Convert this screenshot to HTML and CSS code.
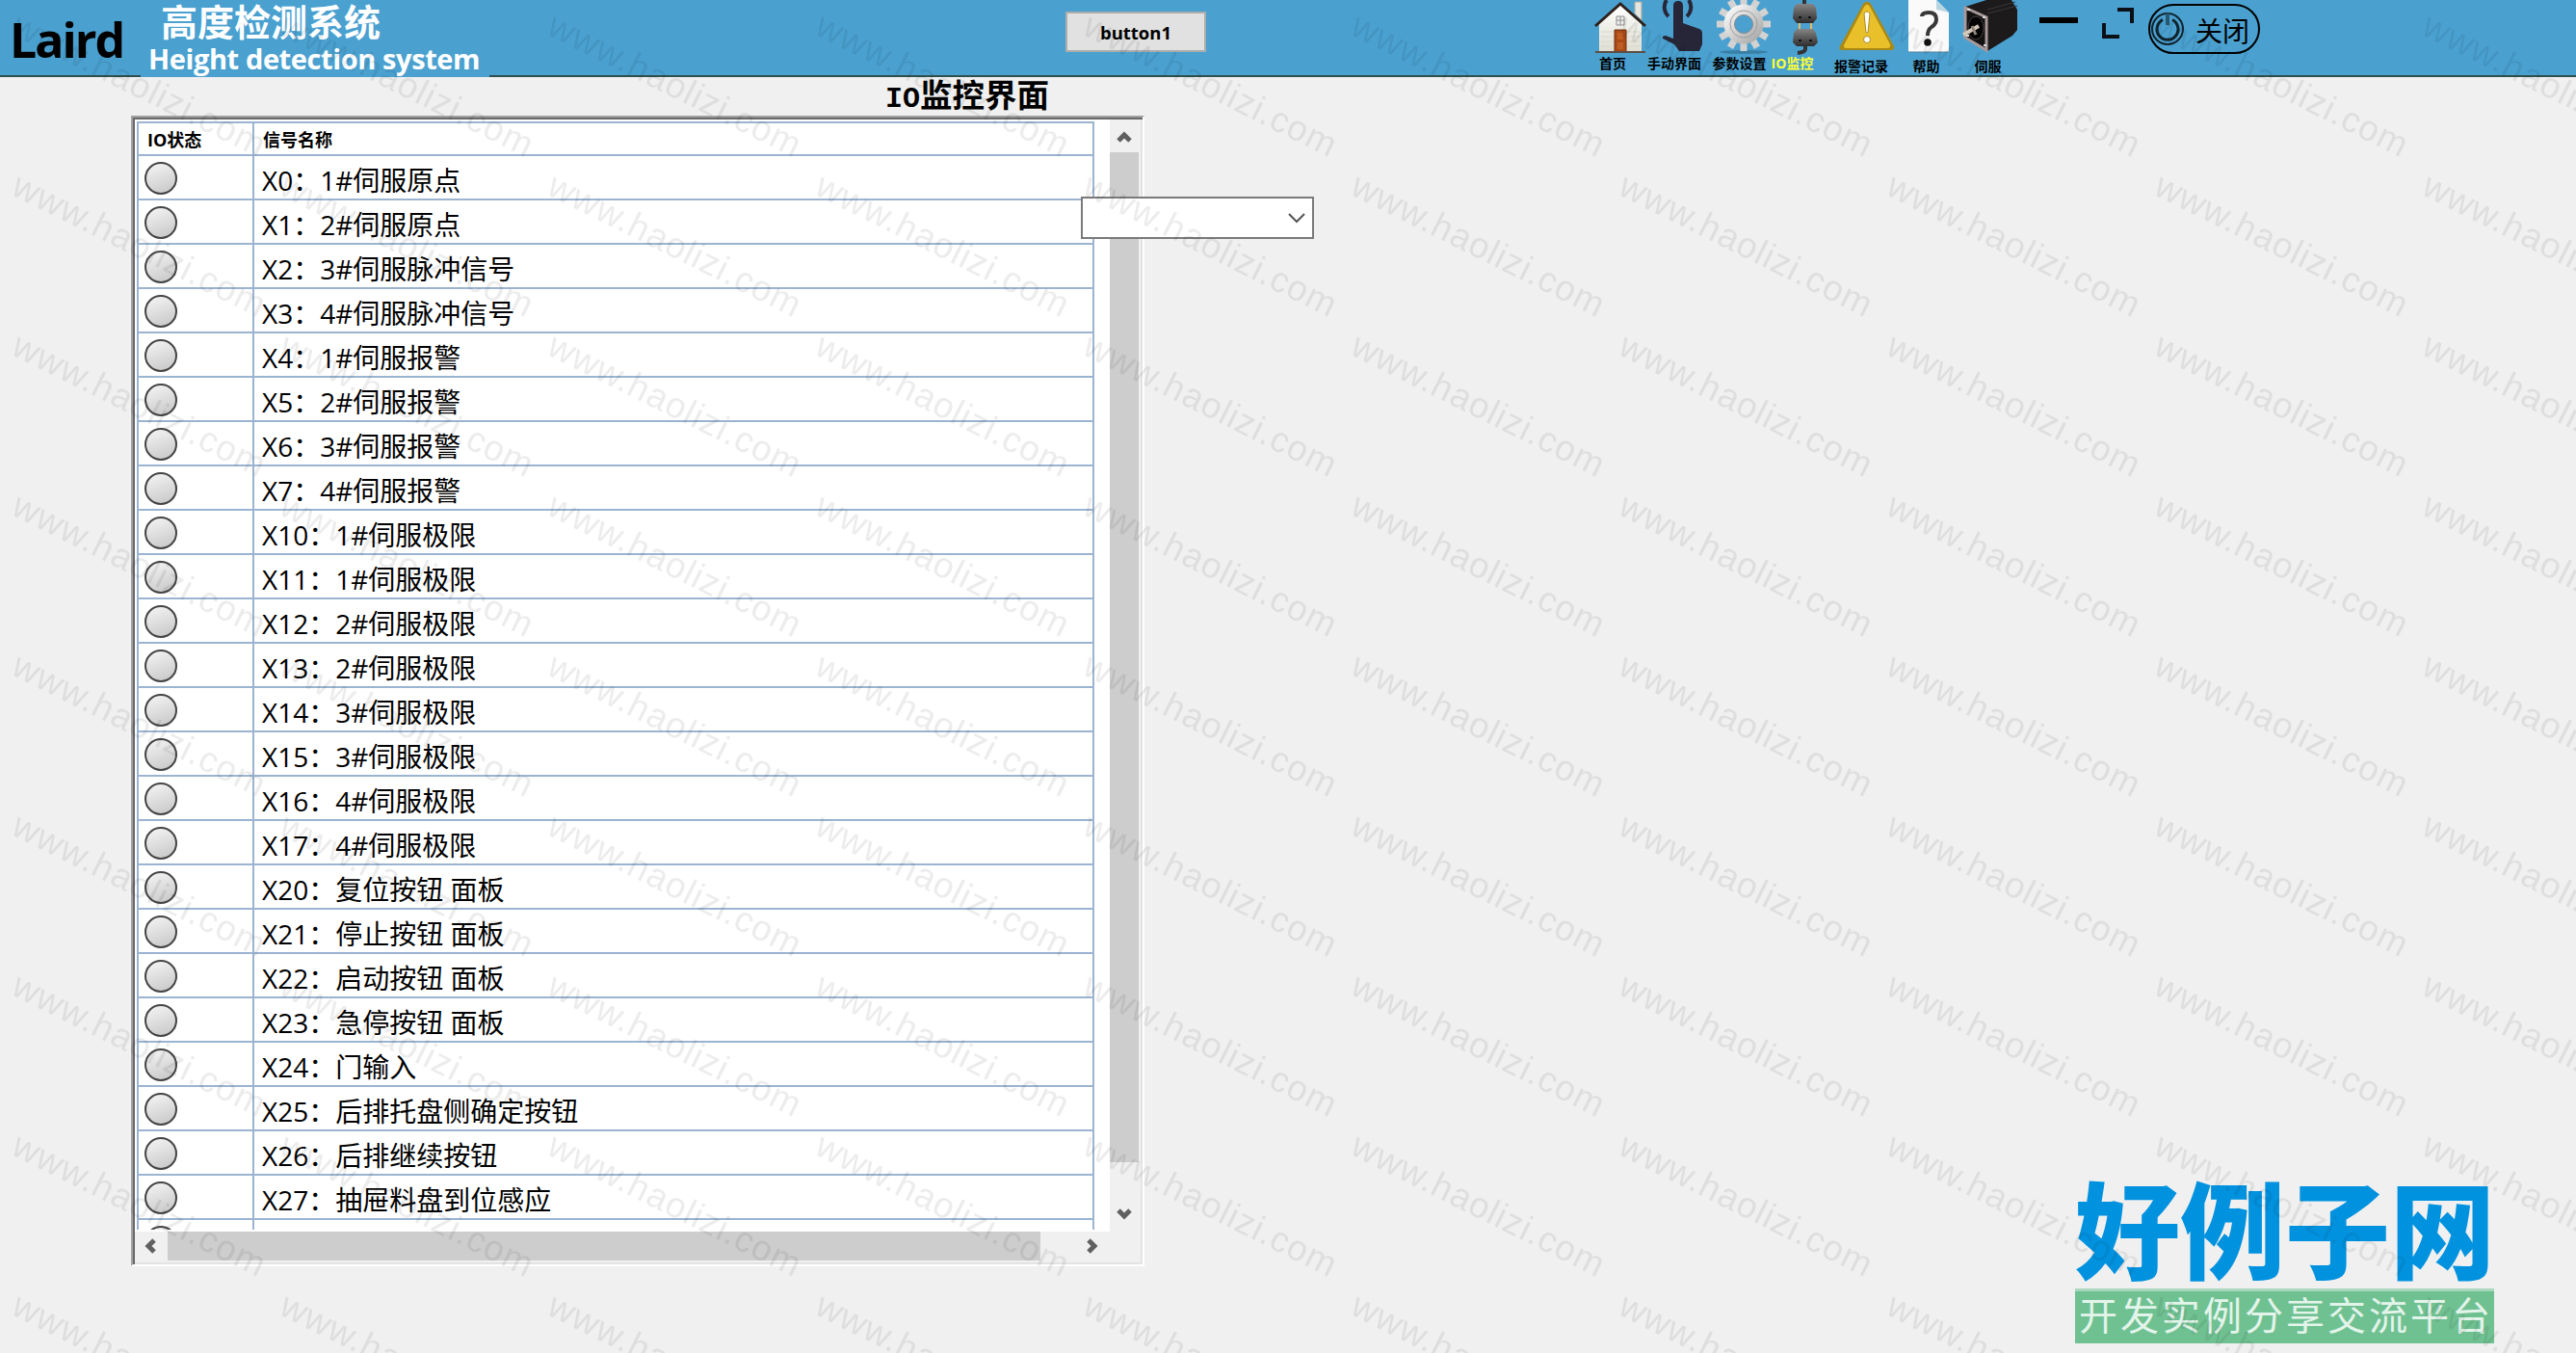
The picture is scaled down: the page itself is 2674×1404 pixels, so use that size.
FILE: index.html
```html
<!DOCTYPE html>
<html lang="zh-CN">
  <head>
    <meta charset="UTF-8" />
    <meta name="viewport" content="width=device-width, initial-scale=1.0" />
    <title>高度检测系统</title>
    <link rel="stylesheet" href="styles.css">
  </head>
  <body>
    <header class="topbar">
      <div class="brand">Laird</div>
      <div class="system-name">
        <div class="name-cn">高度检测系统</div>
        <div class="name-en">Height detection system</div>
      </div>
      <button class="test-btn">button1</button>
      <nav class="menu">
        <a class="menu-item home">
          <svg width="56" height="57" viewBox="0 0 56 57">
            <defs>
              <linearGradient id="wall" x1="0" y1="0" x2="0" y2="1">
                <stop offset="0" stop-color="#ffffff" />
                <stop offset="1" stop-color="#deded2" />
              </linearGradient>
            </defs>
            <path d="M43 2h7v19l-7-7z" fill="#e6e6e0" stroke="#a9a9a0" />
            <path d="M6 25L28 4l22 21v29H6z" fill="url(#wall)" />
            <path d="M8 33h40M8 38h40M8 43h40M8 48h40" stroke="#d8d8cc" />
            <path d="M2 27L28 4l26 23" fill="none" stroke="#2e211c" stroke-width="3" />
            <path d="M24 17h8v9h-8zM28 17v9M24 21h8" fill="#eee" stroke="#8d8d8d" />
            <path d="M22 31h12v23H22z" fill="#ac4a16" stroke="#713010" />
            <path d="M25 34h6v7h-6zM25 44h6v7h-6z" fill="#bf5d25" />
            <path d="M2 54h52" stroke="#5b4e45" stroke-width="2" />
          </svg>
          <span>首页</span>
        </a>
        <a class="menu-item manual">
          <svg width="44" height="57" viewBox="0 0 44 57">
            <path d="M8 17A13 13 0 0 1 6 0M27 17A13 13 0 0 0 29 0" fill="none" stroke="#262638" stroke-width="4" />
            <path d="M13 40V6Q13 1 18 1T23 6v18l17 6q3 1 3 5v11l-3 7H19l-5-7L2 40q-1-3 3-3z" fill="#262638" />
          </svg>
          <span>手动界面</span>
        </a>
        <a class="menu-item setting">
          <svg width="58" height="57" viewBox="-29 -25 58 57">
            <defs>
              <linearGradient id="metal" x1="0" y1="0" x2="1" y2="1">
                <stop offset="0" stop-color="#f7f7f7" />
                <stop offset="1" stop-color="#ababab" />
              </linearGradient>
            </defs>
            <ellipse cx="0" cy="29" rx="25" ry="2" fill="#3980a6" />
            <g stroke="#d2d2d2" stroke-width="7">
              <path d="M0-28V-16M0 16V28M-28 0H-16M16 0H28" />
              <path d="M14-24.2L8-13.9M-14-24.2L-8-13.9M14 24.2L8 13.9M-14 24.2L-8 13.9" />
              <path d="M24.2-14L13.9-8M-24.2-14L-13.9-8M24.2 14L13.9 8M-24.2 14L-13.9 8" />
            </g>
            <circle r="15" fill="none" stroke="url(#metal)" stroke-width="11" />
            <circle r="14" fill="none" stroke="#9d9d9d" />
            <circle r="9.5" fill="none" stroke="#888" />
          </svg>
          <span>参数设置</span>
        </a>
        <a class="menu-item monitor active">
          <svg width="28" height="57" viewBox="0 0 28 57">
            <defs>
              <linearGradient id="plug" x1="0" y1="0" x2="0" y2="1">
                <stop offset="0" stop-color="#858585" />
                <stop offset="1" stop-color="#2e2e2e" />
              </linearGradient>
            </defs>
            <path d="M13 0v6M14 45v6q0 3-8 4" fill="none" stroke="#333" stroke-width="4" />
            <path d="M8 23v8M20 23v8" stroke="#e5bd61" stroke-width="2" />
            <path d="M5 4h17l3 4 1 11-4 5H5l-4-5L2 8z" fill="url(#plug)" />
            <path d="M5 30h17l3 4 2 10-4 4H5l-4-4 1-10z" fill="url(#plug)" />
            <path d="M7 18h3M17 18h3M7 42h3M18 42h3" stroke="#111" stroke-width="2" />
          </svg>
          <span>IO监控</span>
        </a>
        <a class="menu-item alarm">
          <svg width="60" height="57" viewBox="0 0 60 57">
            <path d="M26 4q4-5 8 0l24 44q1 4-3 4H4q-4 0-2-4z" fill="#a98914" />
            <path d="M27 7q3-5 6 0l21 39q1 4-3 4H9q-4 0-3-3z" fill="#e9c02a" />
            <path d="M27 14q3-4 6 0l-2 20h-2z" fill="#fff" stroke="#a98c25" />
            <circle cx="30" cy="41" r="3.5" fill="#fff" stroke="#a98c25" />
          </svg>
          <span>报警记录</span>
        </a>
        <a class="menu-item help">
          <svg width="44" height="57" viewBox="0 0 44 57">
            <path d="M1 0h29l13 13v41H1z" fill="#fafafa" />
            <path d="M30 0l13 13-13-3z" fill="#b9d5e2" />
            <path d="M15 17q0-4 7-4 8 0 8 7 0 5-5 8-4 3-4 9" fill="none" stroke="#383838" stroke-width="4" />
            <circle cx="21" cy="44" r="3.8" fill="#111" />
            <path d="M1 54h42" stroke="#517f96" />
          </svg>
          <span>帮助</span>
        </a>
        <a class="menu-item servo">
          <svg width="60" height="57" viewBox="0 0 60 57">
            <path d="M4 7L26 0h26l6 10v21l-5 6-26 16z" fill="#1d1a1c" />
            <path d="M27 10L56 2M27 14l31-8" stroke="#3b3738" />
            <path d="M4 8l22 10v34L4 39z" fill="#131112" stroke="#a79999" stroke-width="3" />
            <ellipse cx="15" cy="29" rx="8" ry="12" fill="#050505" stroke="#49413f" />
            <path d="M2 36l16-9" stroke="#d3c7b8" stroke-width="4" />
            <path d="M11 27l4 9" stroke="#91877b" stroke-width="3" />
            <path d="M6 10h3M22 18h3M23 47h3M5 37h3" stroke="#ddd" stroke-width="2" />
          </svg>
          <span>伺服</span>
        </a>
      </nav>
      <svg class="minimize" width="40" height="6"><path d="M0 3h40" stroke="#000" stroke-width="6" /></svg>
      <svg class="maximize" width="34" height="34" viewBox="0 0 34 34">
        <path d="M16 2h15v14M2 16v14h16" fill="none" stroke="#0a1016" stroke-width="4" />
      </svg>
      <button class="close-btn">
        <svg width="36" height="36" viewBox="0 0 36 36" fill="none" stroke="#10242e">
          <circle cx="18" cy="18" r="16" stroke-width="2" />
          <path d="M13 8.500A11 11 0 1 0 23 8.500" stroke-width="3" />
          <path d="M18 2v12" stroke="#285870" stroke-width="4" />
        </svg>
        <span>关闭</span>
      </button>
    </header>

    <main class="page">
      <h1 class="page-title"><span>IO</span>监控界面</h1>
      <section class="panel">
        <div class="viewport">
          <div class="io-table">
            <div class="row head"><div>IO状态</div><div>信号名称</div></div>
            <div class="row"><div><i class="lamp"></i></div><div>X0：1#伺服原点</div></div>
            <div class="row"><div><i class="lamp"></i></div><div>X1：2#伺服原点</div></div>
            <div class="row"><div><i class="lamp"></i></div><div>X2：3#伺服脉冲信号</div></div>
            <div class="row"><div><i class="lamp"></i></div><div>X3：4#伺服脉冲信号</div></div>
            <div class="row"><div><i class="lamp"></i></div><div>X4：1#伺服报警</div></div>
            <div class="row"><div><i class="lamp"></i></div><div>X5：2#伺服报警</div></div>
            <div class="row"><div><i class="lamp"></i></div><div>X6：3#伺服报警</div></div>
            <div class="row"><div><i class="lamp"></i></div><div>X7：4#伺服报警</div></div>
            <div class="row"><div><i class="lamp"></i></div><div>X10：1#伺服极限</div></div>
            <div class="row"><div><i class="lamp"></i></div><div>X11：1#伺服极限</div></div>
            <div class="row"><div><i class="lamp"></i></div><div>X12：2#伺服极限</div></div>
            <div class="row"><div><i class="lamp"></i></div><div>X13：2#伺服极限</div></div>
            <div class="row"><div><i class="lamp"></i></div><div>X14：3#伺服极限</div></div>
            <div class="row"><div><i class="lamp"></i></div><div>X15：3#伺服极限</div></div>
            <div class="row"><div><i class="lamp"></i></div><div>X16：4#伺服极限</div></div>
            <div class="row"><div><i class="lamp"></i></div><div>X17：4#伺服极限</div></div>
            <div class="row"><div><i class="lamp"></i></div><div>X20：复位按钮 面板</div></div>
            <div class="row"><div><i class="lamp"></i></div><div>X21：停止按钮 面板</div></div>
            <div class="row"><div><i class="lamp"></i></div><div>X22：启动按钮 面板</div></div>
            <div class="row"><div><i class="lamp"></i></div><div>X23：急停按钮 面板</div></div>
            <div class="row"><div><i class="lamp"></i></div><div>X24：门输入</div></div>
            <div class="row"><div><i class="lamp"></i></div><div>X25：后排托盘侧确定按钮</div></div>
            <div class="row"><div><i class="lamp"></i></div><div>X26：后排继续按钮</div></div>
            <div class="row"><div><i class="lamp"></i></div><div>X27：抽屉料盘到位感应</div></div>
            <div class="row"><div><i class="lamp"></i></div><div></div></div>
          </div>
        </div>
        <div class="scroll-y">
          <svg width="30" height="34"><path d="M9 22l6-6 6 6" /></svg>
          <div class="thumb"></div>
          <svg width="30" height="34"><path d="M9 12l6 6 6-6" /></svg>
        </div>
        <div class="scroll-x">
          <svg width="34" height="30"><path d="M20 9l-6 6 6 6" /></svg>
          <div class="thumb"></div>
          <svg width="34" height="30"><path d="M12 9l6 6-6 6" /></svg>
        </div>
      </section>
      <div class="combo">
        <svg width="18" height="12" viewBox="0 0 18 12"><path d="M1 2l8 8 8-8" fill="none" stroke="#555" stroke-width="2" /></svg>
      </div>
    </main>

    <div class="site-logo">
      <div class="logo-name">好例子网</div>
      <div class="logo-slogan">开发实例分享交流平台</div>
    </div>

    <svg class="watermark" width="2674" height="1404">
      <defs>
        <pattern id="mark" width="278" height="166" patternUnits="userSpaceOnUse">
          <text transform="translate(10 35) rotate(26.5)" textLength="288" font-size="37">www.haolizi.com</text>
        </pattern>
      </defs>
      <rect width="2674" height="1404" fill="url(#mark)" />
    </svg>
  </body>
</html>
```
FILE: styles.css
```css
* {
  box-sizing: border-box;
}
body {
  margin: 0;
  height: 1404px;
  overflow: hidden;
  position: relative;
  background: #f0f0f0;
  color: #000;
  font-family: "Open Sans", "Noto Sans CJK SC", sans-serif;
}
svg {
  display: block;
  flex: none;
}
button {
  font-family: inherit;
  color: #000;
  padding: 0;
}

/* top bar */
.topbar {
  display: flex;
  align-items: flex-start;
  height: 80px;
  background: #4aa1d0;
  border-bottom: 2px solid #2f4f4f;
}
.brand {
  width: 146px;
  padding: 6px 0 0 10px;
  font-size: 50px;
  line-height: 70px;
  font-weight: bold;
  letter-spacing: -2px;
}
.system-name {
  width: 362px;
  height: 80px;
  background: #4aa1d0;
  color: #fff;
  font-weight: bold;
  white-space: nowrap;
}
.name-cn {
  padding-left: 21px;
  font-size: 38px;
  line-height: 44px;
}
.name-en {
  padding-left: 8px;
  font-size: 29px;
  line-height: 34px;
  letter-spacing: -0.4px;
}
.test-btn {
  width: 146px;
  height: 42px;
  margin: 12px 0 0 598px;
  border: 2px solid #adadad;
  background: #e1e1e1;
  font-size: 18.5px;
  font-weight: bold;
}
.menu {
  display: grid;
  grid-template-columns: repeat(7, 64px);
  margin-left: 398px;
}
.menu-item {
  display: flex;
  flex-direction: column;
  align-items: center;
}
.menu-item span {
  margin-top: 2px;
  font-size: 14px;
  line-height: 14px;
  font-weight: bold;
  white-space: nowrap;
}
.home span,
.manual span {
  margin-right: 16px;
}
.setting span {
  margin-right: 9px;
}
.monitor span {
  margin-right: 27px;
  color: #ff3;
}
.alarm span {
  margin-top: 5px;
  margin-right: 12px;
}
.help span,
.servo span {
  margin-top: 5px;
  margin-right: 5px;
}
.minimize {
  margin: 18px 0 0 19px;
}
.maximize {
  margin: 8px 0 0 25px;
}
.close-btn {
  display: flex;
  align-items: center;
  width: 116px;
  height: 52px;
  margin: 4px 0 0 14px;
  border: 2px solid #000;
  border-radius: 26px;
  background: none;
  font-size: 28px;
}
.close-btn span {
  margin: 2px 0 0 11px;
}

/* IO list */
.page-title {
  margin: 0;
  padding-left: 919px;
  height: 40px;
  font: bold 33.5px/34px "Noto Sans CJK SC", sans-serif;
}
.page-title span {
  font-family: "Liberation Mono", monospace;
  font-size: 30px;
}
.panel {
  display: grid;
  grid-template-columns: 1012px 32px;
  grid-template-rows: 1154px 32px;
  width: 1052px;
  height: 1194px;
  margin-left: 136px;
  border: 2px solid;
  border-color: #a0a0a0 #fff #fff #a0a0a0;
  box-shadow: inset 2px 2px #696969, inset -2px -2px #e3e3e3;
  padding: 2px;
}
.viewport {
  overflow: hidden;
  background: #fff;
  padding: 2px 0 0 2px;
  border-bottom: 2px solid #fff;
}
.io-table {
  width: 994px;
  border: 2px solid #9ab4d1;
}
.row {
  display: grid;
  grid-template-columns: 118px 1fr;
  height: 46px;
  border-bottom: 2px solid #9ab4d1;
  font-size: 28px;
  line-height: 50px;
  white-space: nowrap;
}
.row > div {
  padding-left: 6px;
}
.row > div + div {
  padding-left: 8px;
  border-left: 2px solid #9ab4d1;
}
.row.head {
  height: 34px;
  font-size: 18px;
  line-height: 35px;
  font-weight: bold;
}
.row.head > div {
  padding-left: 9px;
}
.lamp {
  display: block;
  width: 34px;
  height: 34px;
  margin-top: 6px;
  border: 2px solid #444;
  border-radius: 50%;
  background: linear-gradient(160deg, #f5f5f5, #c6c6c6);
}
.scroll-y {
  display: flex;
  flex-direction: column;
  justify-content: space-between;
  width: 30px;
  height: 1154px;
}
.scroll-y .thumb {
  height: 1048px;
  margin-bottom: auto;
  background: #cdcdcd;
}
.scroll-x {
  display: flex;
  height: 30px;
}
.scroll-x .thumb {
  width: 906px;
  margin-right: 38px;
  background: #cdcdcd;
}
.panel path {
  fill: none;
  stroke: #606060;
  stroke-width: 5;
}

/* floating select over the right edge of the list */
.combo {
  position: absolute;
  left: 1122px;
  top: 204px;
  width: 242px;
  height: 44px;
  display: flex;
  align-items: center;
  justify-content: flex-end;
  padding-right: 7px;
  border: 2px solid #7a7a7a;
  background: #fff;
}

/* corner logo */
.site-logo {
  position: absolute;
  left: 2154px;
  top: 1220px;
  width: 435px;
  font-family: "Noto Sans CJK SC", sans-serif;
  white-space: nowrap;
}
.logo-name {
  height: 117px;
  color: #0092df;
  font-size: 109px;
  line-height: 104px;
  font-weight: 900;
}
.logo-slogan {
  height: 57px;
  padding-left: 4px;
  border-top: 3px solid #a9d8bf;
  background: #70c192;
  color: #e3f4ea;
  font-size: 40px;
  line-height: 46px;
  letter-spacing: 3px;
}

.watermark {
  position: absolute;
  left: 0;
  top: 0;
  pointer-events: none;
  font-family: "Liberation Sans", Arial, sans-serif;
  fill: rgba(0, 0, 0, 0.075);
}
```
